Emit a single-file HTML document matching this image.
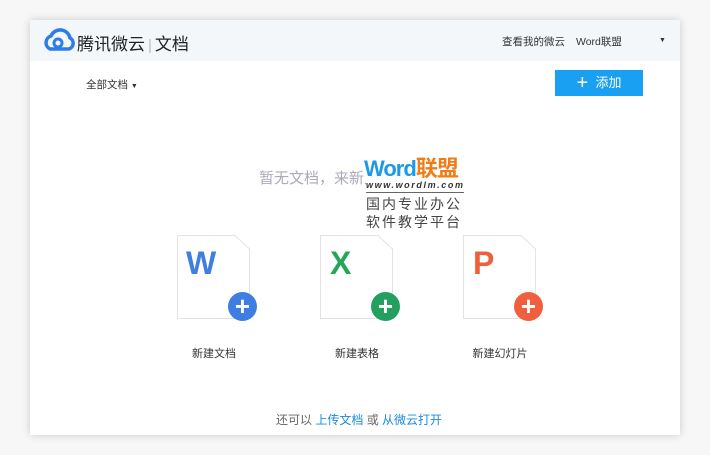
<!DOCTYPE html><html><head><meta charset="utf-8"><style>
body{margin:0;width:710px;height:455px;background:#f7f7f7;font-family:"Liberation Sans","Noto Sans CJK SC",sans-serif;position:relative;overflow:hidden}
.card{position:absolute;left:30px;top:20px;width:650px;height:415px;background:#fff;box-shadow:0 0 8px rgba(0,0,0,.18)}
.hdr{position:absolute;left:0;top:0;width:650px;height:41px;background:#f4f7fa}
.a{position:absolute;white-space:nowrap}
.letter{position:absolute;font-size:32px;font-weight:bold;font-family:"Liberation Sans",sans-serif}
.plus{position:absolute;width:29px;height:29px;border-radius:50%;color:#fff;font-size:26px;line-height:28px;text-align:center;font-weight:bold}
.lbl{position:absolute;font-size:11px;color:#333;width:100px;text-align:center}
</style></head><body>
<div class="card">
<div class="hdr">
<svg class="a" style="left:12px;top:8px" width="34" height="24" viewBox="0 0 34 24"><path d="M8 21 A7 7 0 0 1 9 8 A10 10 0 0 1 28 10 A6 6 0 0 1 27 21 Z" fill="none" stroke="#2b7de9" stroke-width="3.5"/><circle cx="16" cy="15" r="4" fill="none" stroke="#2b7de9" stroke-width="3"/></svg>
<div class="a" style="left:47px;top:10px;font-size:17px;color:#222">腾讯微云<span style="color:#bbb;margin:0 3px;font-size:15px">|</span>文档</div>
<div class="a" style="left:472px;top:14px;font-size:10.5px;color:#333">查看我的微云</div>
<div class="a" style="left:546px;top:14px;font-size:10.5px;color:#333">Word联盟</div>
<div class="a" style="left:629px;top:17px;font-size:7px;color:#333">▼</div>
</div>
<div class="a" style="left:56px;top:57px;font-size:10.5px;color:#333">全部文档 <span style="font-size:7px">▼</span></div>
<div class="a" style="left:525px;top:50px;width:88px;height:26px;background:#1aa0f2;color:#fff;font-size:13px;line-height:26px;text-align:center"><span style="font-size:20px;vertical-align:-2px">+</span>&nbsp; 添加</div>
<div class="a" style="left:229px;top:147px;font-size:15px;color:#aab">暂无文档，来新建文档吧</div>
<div class="a" style="left:334px;top:137px;font-size:22px;font-weight:bold;color:#1a9ae8;letter-spacing:-1px;background:#fff;line-height:24px">Word<span style="color:#f07b17">联盟</span></div>
<div class="a" style="left:336px;top:160px;font-size:9px;font-weight:bold;font-style:italic;color:#333;letter-spacing:1.6px;background:#fff">www.wordlm.com</div>
<div class="a" style="left:336px;top:172px;width:98px;border-top:1px solid #666"></div>
<div class="a" style="left:336px;top:175px;font-size:14px;color:#444;letter-spacing:2px;line-height:18px">国内专业办公<br>软件教学平台</div>
<svg class="a" style="left:147px;top:215px" width="73" height="84"><path d="M0.5 0.5H58L72.5 14V83.5H0.5Z" fill="#fff" stroke="#e3e3e3"/></svg>
<div class="letter" style="left:156px;top:225px;color:#3f7fe0">W</div><div class="plus" style="left:198px;top:272px;background:#3e7ee2">+</div>
<svg class="a" style="left:290px;top:215px" width="73" height="84"><path d="M0.5 0.5H58L72.5 14V83.5H0.5Z" fill="#fff" stroke="#e3e3e3"/></svg>
<div class="letter" style="left:300px;top:225px;color:#25a55a">X</div><div class="plus" style="left:341px;top:272px;background:#23a060">+</div>
<svg class="a" style="left:433px;top:215px" width="73" height="84"><path d="M0.5 0.5H58L72.5 14V83.5H0.5Z" fill="#fff" stroke="#e3e3e3"/></svg>
<div class="letter" style="left:443px;top:225px;color:#ef5f3e">P</div><div class="plus" style="left:484px;top:272px;background:#ef5f3e">+</div>
<div class="lbl" style="left:134px;top:325px">新建文档</div>
<div class="lbl" style="left:277px;top:325px">新建表格</div>
<div class="lbl" style="left:420px;top:325px">新建幻灯片</div>
<div class="a" style="left:246px;top:391px;font-size:12px;color:#666">还可以 <span style="color:#1a8be0">上传文档</span> 或 <span style="color:#1a8be0">从微云打开</span></div>
</div>
</body></html>
